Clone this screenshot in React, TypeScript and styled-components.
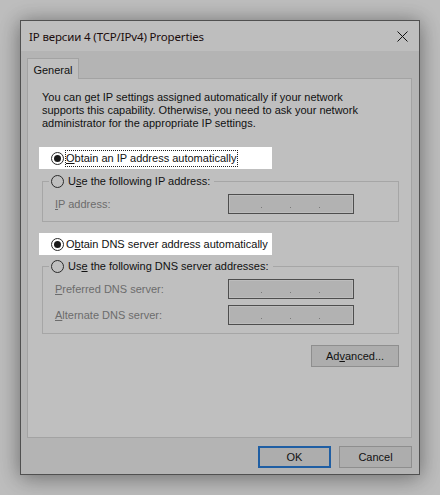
import React from "react";
import styled, { createGlobalStyle } from "styled-components";

const Global = createGlobalStyle`
  html, body { margin: 0; padding: 0; background: #bdbdbd; }
  body { font-family: "Liberation Sans", Arial, sans-serif; font-size: 11px; color: #111; }
  * { box-sizing: border-box; }
`;

const Page = styled.div`
  width: 440px;
  height: 495px;
  padding: 20px;
  background: #bdbdbd;
`;

const Window = styled.div`
  width: 400px;
  height: 455px;
  border: 1px solid #505050;
  background: #b4b4b4;
  box-shadow: 0 0 18px rgba(0, 0, 0, 0.28), 0 6px 22px rgba(0, 0, 0, 0.2);
  display: flex;
  flex-direction: column;
`;

const TitleBar = styled.div`
  height: 30px;
  flex: none;
  background: #bebebe;
  display: flex;
  align-items: center;
  justify-content: space-between;
  padding: 0 11px 0 8px;
`;

const Title = styled.span`
  font-family: "Noto Sans", "Open Sans", sans-serif;
  font-size: 11.5px;
  color: #1a0c0c;
  letter-spacing: -0.15px;
`;

const Body = styled.div`
  flex: 1;
  padding: 7px 8px 0 6px;
  display: flex;
  flex-direction: column;
`;

const TabStrip = styled.div`
  display: flex;
  height: 20px;
`;

const Tab = styled.div`
  width: 52px;
  height: 21px;
  border: 1px solid #a3a3a3;
  border-bottom: none;
  background: #bfbfbf;
  display: flex;
  align-items: center;
  justify-content: center;
  padding-top: 1px;
  font-size: 11px;
  position: relative;
  z-index: 1;
`;

const Panel = styled.div`
  width: 385px;
  height: 360px;
  border: 1px solid #a3a3a3;
  background: #bfbfbf;
  padding: 12px 12px 0 14px;
  display: flex;
  flex-direction: column;
`;

const Paragraph = styled.p`
  margin: 0;
  line-height: 13px;
  font-size: 11px;
  color: #111;
`;

const Highlight = styled.div<{ $top: number }>`
  width: 233px;
  height: 22px;
  margin: ${(p) => p.$top}px 0 0 -3px;
  background: #ffffff;
  display: flex;
  align-items: center;
  padding-left: 12px;
`;

const Radio = styled.span<{ $checked?: boolean; $light?: boolean }>`
  width: 13px;
  height: 13px;
  border-radius: 50%;
  border: 1px solid #2a2a2a;
  background: ${(p) => (p.$light ? "#ffffff" : "transparent")};
  display: inline-flex;
  align-items: center;
  justify-content: center;
  flex: none;
  &::after {
    content: "";
    display: ${(p) => (p.$checked ? "block" : "none")};
    width: 7px;
    height: 7px;
    border-radius: 50%;
    background: #1a1a1a;
  }
`;

const RadioText = styled.span<{ $focus?: boolean; $gap: number }>`
  margin-left: ${(p) => p.$gap}px;
  line-height: 13px;
  padding: 1px 1px 1px 0;
  outline: ${(p) => (p.$focus ? "1px dotted #222" : "none")};
  outline-offset: 0;
  white-space: nowrap;
`;

const Group = styled.fieldset<{ $top: number }>`
  margin: ${(p) => p.$top}px 0 0 0;
  width: 357px;
  padding: 0 0 0 12px;
  border: 1px solid #a6a6a6;
  min-inline-size: 0;
`;

const Legend = styled.legend`
  margin-left: -6px;
  padding: 0 3px 0 2px;
  display: flex;
  align-items: center;
  height: 14px;
`;

const FieldRow = styled.div<{ $top: number }>`
  display: flex;
  align-items: center;
  justify-content: space-between;
  width: 299px;
  margin-top: ${(p) => p.$top}px;
`;

const Disabled = styled.span`
  color: #6c6c6c;
`;

const IpBox = styled.div`
  width: 126px;
  height: 20px;
  border: 1px solid #4e4e4e;
  background: #b2b2b2;
  display: flex;
  align-items: flex-end;
  padding: 0 0 5px 32px;
  gap: 28px;
  box-shadow: inset 0 0 0 1px #bcbcbc;
`;

const Dot = styled.span`
  width: 1px;
  height: 1px;
  background: #7a7a7a;
`;

const GroupSpacer = styled.div<{ $h: number }>`
  height: ${(p) => p.$h}px;
`;

const PanelActions = styled.div`
  display: flex;
  justify-content: flex-end;
  width: 357px;
  margin-top: 11px;
`;

const Button = styled.button<{ $default?: boolean; $w: number }>`
  width: ${(p) => p.$w}px;
  height: 22px;
  font-family: "Liberation Sans", Arial, sans-serif;
  font-size: 11px;
  color: #111;
  background: #adadad;
  border: ${(p) => (p.$default ? "2px solid #1f5ea3" : "1px solid #8e8e8e")};
  padding: 0;
  display: flex;
  align-items: center;
  justify-content: center;
`;

const Footer = styled.div`
  display: flex;
  justify-content: flex-end;
  gap: 8px;
  margin-top: 8px;
  width: 385px;
`;

const Close = styled.svg`
  width: 11px;
  height: 11px;
  display: block;
`;

function Ip() {
  return (
    <IpBox>
      <Dot />
      <Dot />
      <Dot />
    </IpBox>
  );
}

export default function App() {
  return (
    <>
      <Global />
      <Page>
        <Window>
          <TitleBar>
            <Title>IP версии 4 (TCP/IPv4) Properties</Title>
            <Close viewBox="0 0 11 11">
              <path d="M0.5 0.5 L10.5 10.5 M10.5 0.5 L0.5 10.5" stroke="#111" strokeWidth="1" fill="none" />
            </Close>
          </TitleBar>
          <Body>
            <TabStrip>
              <Tab>General</Tab>
            </TabStrip>
            <Panel>
              <Paragraph>
                You can get IP settings assigned automatically if your network
                <br />
                supports this capability. Otherwise, you need to ask your network
                <br />
                administrator for the appropriate IP settings.
              </Paragraph>
              <Highlight $top={17}>
                <Radio $checked $light />
                <RadioText $focus $gap={2}>
                  <u>O</u>btain an IP address automatically
                </RadioText>
              </Highlight>
              <Group $top={5}>
                <Legend>
                  <Radio />
                  <RadioText $gap={4}>
                    U<u>s</u>e the following IP address:
                  </RadioText>
                </Legend>
                <FieldRow $top={6}>
                  <Disabled>
                    <u>I</u>P address:
                  </Disabled>
                  <Ip />
                </FieldRow>
                <GroupSpacer $h={7} />
              </Group>
              <Highlight $top={11}>
                <Radio $checked $light />
                <RadioText $gap={2}>
                  O<u>b</u>tain DNS server address automatically
                </RadioText>
              </Highlight>
              <Group $top={4}>
                <Legend>
                  <Radio />
                  <RadioText $gap={4}>
                    Us<u>e</u> the following DNS server addresses:
                  </RadioText>
                </Legend>
                <FieldRow $top={6}>
                  <Disabled>
                    <u>P</u>referred DNS server:
                  </Disabled>
                  <Ip />
                </FieldRow>
                <FieldRow $top={6}>
                  <Disabled>
                    <u>A</u>lternate DNS server:
                  </Disabled>
                  <Ip />
                </FieldRow>
                <GroupSpacer $h={8} />
              </Group>
              <PanelActions>
                <Button $w={88}>
                  Ad<u>v</u>anced...
                </Button>
              </PanelActions>
            </Panel>
            <Footer>
              <Button $default $w={73}>
                OK
              </Button>
              <Button $w={73}>Cancel</Button>
            </Footer>
          </Body>
        </Window>
      </Page>
    </>
  );
}
